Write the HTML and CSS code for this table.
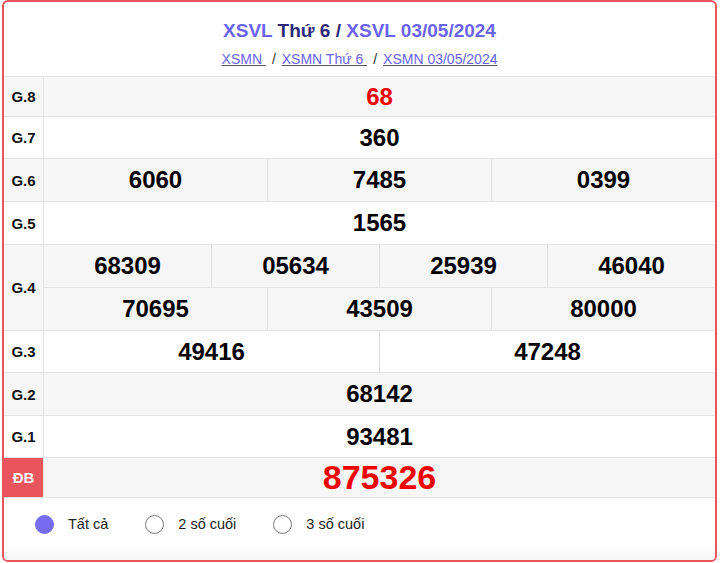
FILE: index.html
```html
<!DOCTYPE html>
<html lang="vi">
<head>
<meta charset="utf-8">
<link rel="stylesheet" href="styles.css">
</head>
<body>
<div class="card">
  <div class="head">
    <h2 class="title"><a class="t-link">XSVL</a> Thứ 6 / <a class="t-link">XSVL 03/05/2024</a></h2>
    <div class="crumbs"><a class="crumb">XSMN </a><span class="sep">/</span><a class="crumb">XSMN Thứ 6 </a><span class="sep">/</span><a class="crumb">XSMN 03/05/2024</a></div>
  </div>
  <div class="rows">
    <div class="row alt h39"><div class="label">G.8</div><div class="vals"><div class="line"><div class="num red">68</div></div></div></div>
    <div class="row h41"><div class="label">G.7</div><div class="vals"><div class="line"><div class="num">360</div></div></div></div>
    <div class="row alt h42"><div class="label">G.6</div><div class="vals"><div class="line"><div class="num">6060</div><div class="num">7485</div><div class="num">0399</div></div></div></div>
    <div class="row h42"><div class="label">G.5</div><div class="vals"><div class="line"><div class="num">1565</div></div></div></div>
    <div class="row alt h42"><div class="label">G.4</div><div class="vals">
      <div class="line"><div class="num">68309</div><div class="num">05634</div><div class="num">25939</div><div class="num">46040</div></div>
      <div class="line"><div class="num">70695</div><div class="num">43509</div><div class="num">80000</div></div>
    </div></div>
    <div class="row h41"><div class="label">G.3</div><div class="vals"><div class="line"><div class="num">49416</div><div class="num">47248</div></div></div></div>
    <div class="row alt h42"><div class="label">G.2</div><div class="vals"><div class="line"><div class="num">68142</div></div></div></div>
    <div class="row h41"><div class="label">G.1</div><div class="vals"><div class="line"><div class="num">93481</div></div></div></div>
    <div class="row alt h39 last"><div class="label db">ĐB</div><div class="vals"><div class="line"><div class="num red big">875326</div></div></div></div>
  </div>
  <div class="foot">
    <label class="opt"><span class="radio on"></span><span>Tất cả</span></label>
    <label class="opt"><span class="radio"></span><span>2 số cuối</span></label>
    <label class="opt"><span class="radio"></span><span>3 số cuối</span></label>
  </div>
</div>
</body>
</html>
```
FILE: styles.css
```css
html, body { margin: 0; padding: 0; background: #fff; }
body { font-family: "Liberation Sans", Arial, sans-serif; color: #000; }
.card {
  margin-left: 2px;
  width: 715px;
  height: 562px;
  box-sizing: border-box;
  border: 2px solid #e8555c;
  border-radius: 6px;
  overflow: hidden;
  display: flex;
  flex-direction: column;
}
.head { padding-top: 18px; padding-bottom: 8px; text-align: center; }
.title { margin: 0; font-size: 19px; line-height: 22px; font-weight: bold; color: #2c2a78; }
.t-link { color: #6b63ee; }
.crumbs { margin-top: 8px; font-size: 14px; line-height: 18px; color: #333; }
.crumb { color: #6b63ee; text-decoration: underline; text-decoration-color: #555; }
.sep { margin: 0 6px; }
.rows { border-top: 1px solid #e4e4e6; }
.row { display: flex; border-top: 1px solid #e4e4e6; background: #fff; }
.row:first-child { border-top: 0; }
.row.alt { background: #f6f6f6; }
.row.last { border-bottom: 1px solid #e4e4e6; }
.label {
  width: 39px;
  border-right: 1px solid #e4e4e6;
  display: flex;
  align-items: center;
  justify-content: center;
  font-weight: bold;
  font-size: 15px;
  color: #111;
}
.label.db { background: #e8555c; color: #fff; }
.vals { flex: 1; display: flex; flex-direction: column; }
.line { display: flex; }
.line + .line { border-top: 1px solid #e4e4e6; }
.h39 .line { height: 39px; }
.h41 .line { height: 41px; }
.h42 .line { height: 42px; }
.num {
  flex: 1;
  display: flex;
  align-items: center;
  justify-content: center;
  font-size: 24px;
  font-weight: bold;
  color: #000;
}
.num + .num { border-left: 1px solid #dedee0; }
.num.red { color: #ee0000; }
.num.big { font-size: 34px; }
.foot {
  flex: 1;
  display: flex;
  align-items: center;
  padding-left: 31px;
  padding-bottom: 10px;
  background: linear-gradient(to bottom, #fff 0%, #fff 75%, #f6f6f6 100%);
}
.opt { display: flex; align-items: center; font-size: 14.5px; color: #222; margin-right: 37px; }
.radio {
  width: 17px;
  height: 17px;
  border-radius: 50%;
  border: 1px solid #7a7a7a;
  background: #fff;
  margin-right: 14px;
}
.radio.on { background: #766cf0; border-color: #766cf0; }
```
